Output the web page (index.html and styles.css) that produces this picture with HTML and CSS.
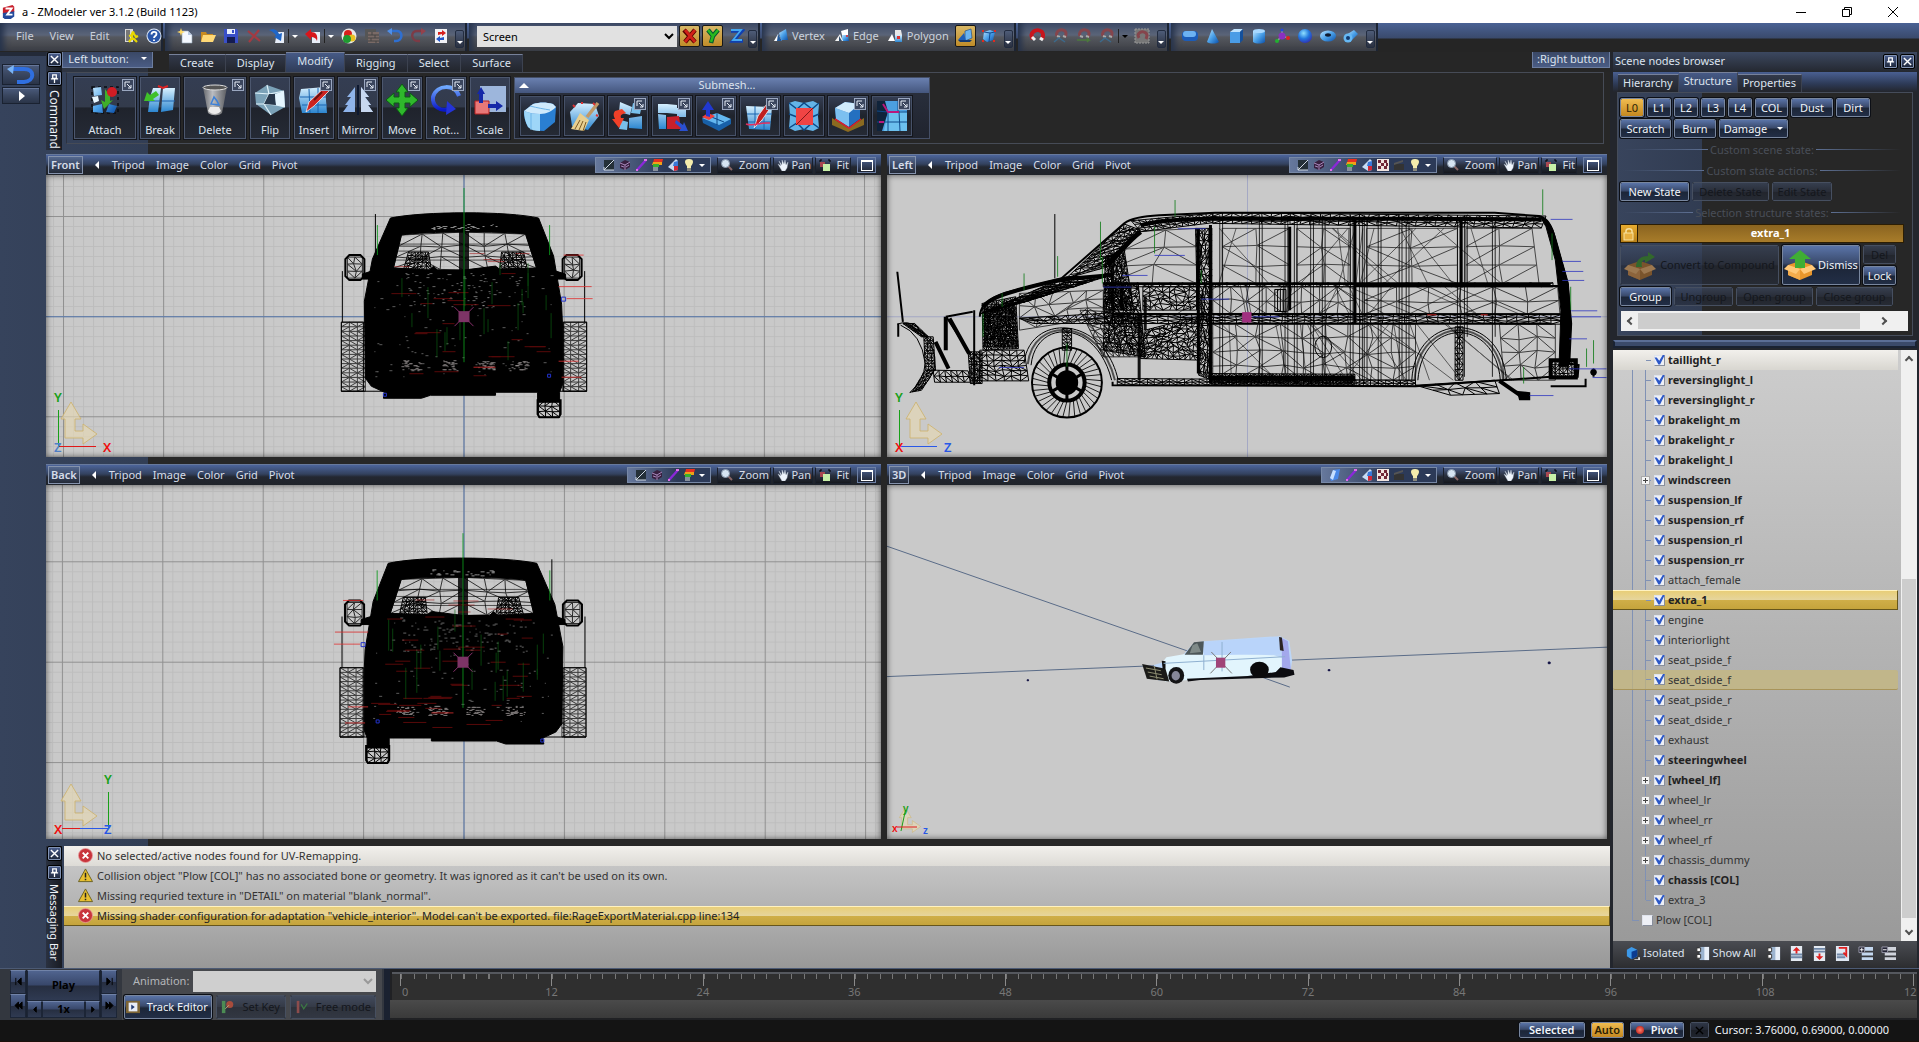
FILE: index.html
```html
<!DOCTYPE html>
<html lang="en">
<head>
<meta charset="utf-8">
<title>a - ZModeler ver 3.1.2 (Build 1123)</title>
<link rel="stylesheet" href="styles.css">
</head>
<body>
<svg class="sprite" aria-hidden="true">
  <defs>
    <linearGradient id="gBlue" x1="0" y1="0" x2="1" y2="1"><stop offset="0" stop-color="#bfe6ff"/><stop offset=".5" stop-color="#4aa0e8"/><stop offset="1" stop-color="#0b4fa8"/></linearGradient>
    <linearGradient id="gIce" x1="0" y1="0" x2="0" y2="1"><stop offset="0" stop-color="#d6f0ff"/><stop offset="1" stop-color="#2c86d0"/></linearGradient>
    <linearGradient id="gBin" x1="0" y1="0" x2="1" y2="0"><stop offset="0" stop-color="#777"/><stop offset=".4" stop-color="#e8e8e8"/><stop offset="1" stop-color="#666"/></linearGradient>
    <linearGradient id="gRot" x1="0" y1="0" x2="0" y2="1"><stop offset="0" stop-color="#6fa8ff"/><stop offset="1" stop-color="#0a18c8"/></linearGradient>
    <radialGradient id="gBall" cx=".4" cy=".3" r=".8"><stop offset="0" stop-color="#8fe0ff"/><stop offset=".5" stop-color="#2277dd"/><stop offset="1" stop-color="#3322aa"/></radialGradient>
    <pattern id="minor" width="10" height="10" patternUnits="userSpaceOnUse"><path d="M0 .5H10M.5 0V10" stroke="#000" stroke-opacity=".06"/></pattern>
    <pattern id="major" width="100" height="100" patternUnits="userSpaceOnUse"><path d="M0 .5H100M.5 0V100" stroke="#000" stroke-opacity=".24"/></pattern>
  </defs>
  <symbol id="logo" viewBox="0 0 16 16"><path d="M1 3 12 0l2 2v6L1 10z" fill="#c8202c"/><path d="M1 9 14 7v6l-4 3H3l-2-2z" fill="#234a9c"/><path d="M4 4h7L6 11h6" fill="none" stroke="#fff" stroke-width="2.2"/></symbol>
  <symbol id="exit" viewBox="0 0 16 16"><path d="M2 1h8v13H2z" fill="#d8d8d8"/><path d="M3 2h4v11H3z" fill="#777"/><path d="M8 6h3l2 3 2-1M9 6v4l-3 4M10 10l4 4M6 8l3-1" fill="none" stroke="#e8d800" stroke-width="2.2"/><circle cx="10" cy="4.500" r="1.600" fill="#e8d800"/></symbol>
  <symbol id="help" viewBox="0 0 16 16"><circle cx="8" cy="8" r="7.500" fill="#dfe8f5"/><circle cx="8" cy="8" r="6.500" fill="#2a56a8"/><path d="M5.500 6.500C5.500 3 10.500 3 10.500 6 10.500 8 8 8 8 10M8 11.500v1.500" fill="none" stroke="#fff" stroke-width="1.800"/></symbol>
  <symbol id="new" viewBox="0 0 16 16"><path d="M5 3h6l4 4v8H5z" fill="#f4f8ff" stroke="#9ab" stroke-width=".6"/><path d="M11 3v4h4z" fill="#b8c8e0"/><path d="m4 0 1 3 3 1-3 1-1 3-1-3-3-1 3-1z" fill="#ffd964"/></symbol>
  <symbol id="open" viewBox="0 0 16 16"><path d="M1 4h5l1 2h6v7H1z" fill="#c88a20"/><path d="M3 7h13l-3 7H1z" fill="#ffd977"/></symbol>
  <symbol id="save" viewBox="0 0 16 16"><path d="M1 1h13l1 2v12H1z" fill="#3a4fc8"/><path d="M4 1h8v5H4z" fill="#e8eefc"/><path d="M4 9h8v6H4z" fill="#151c50"/><path d="M9 2h2v3H9z" fill="#3a4fc8"/></symbol>
  <symbol id="cross" viewBox="0 0 16 16"><path d="m2 3 12 10M13 2 3 14" stroke="#a33a42" stroke-width="2.200"/></symbol>
  <symbol id="import" viewBox="0 0 16 16"><path d="M8 4h7v11H6z" fill="#e8eef8"/><path d="M0 2c6-2 9 1 10 4l3-1-1 8-7-4 2-1C6 5 4 4 0 2z" fill="#1f66c8"/></symbol>
  <symbol id="export" viewBox="0 0 16 16"><path d="M7 4h8v11H7z" fill="#e8eef8"/><path d="m0 6 6-5v3c5 0 7 3 6 9-1-3-3-4-6-4v3z" fill="#d8161c"/></symbol>
  <symbol id="mats" viewBox="0 0 16 16"><circle cx="8" cy="8" r="7.500" fill="#e8e8e8"/><circle cx="7" cy="6" r="4" fill="#d8201c"/><circle cx="11" cy="10" r="3.500" fill="#e8c020"/><circle cx="6" cy="11" r="4" fill="#1f9a30"/></symbol>
  <symbol id="bricks" viewBox="0 0 16 16"><path d="M1 1h11v11H1z" fill="#555"/><path d="M4 4h11v11H4z" fill="#7a6a66"/><path d="M4 7h11M4 10h11M4 13h11M8 4v3M11 7v3M7 10v3M12 13v2" stroke="#444"/></symbol>
  <symbol id="undo" viewBox="0 0 16 16"><path d="M3 3h7c6 0 6 10-1 10H7" fill="none" stroke="#2f6fd0" stroke-width="2.600"/><path d="M0 3 5 0v7z" fill="#4f8fe8"/></symbol>
  <symbol id="redo" viewBox="0 0 16 16"><path d="M13 3H7C0 3 1 13 8 13h2" fill="none" stroke="#7d3b46" stroke-width="2.400"/><path d="m16 3-5-3v7z" fill="#94424c"/></symbol>
  <symbol id="sync" viewBox="0 0 16 16"><path d="M2 1h12v14H2z" fill="#f2f2f5"/><path d="M5 7V4h4V2l4 3-4 3V6" fill="#d8201c"/><path d="M11 9v3H7v2l-4-3 4-3v2" fill="#2255c8"/></symbol>
  <symbol id="ax" viewBox="0 0 16 16"><path d="m2 2 11 12M13 2 3 14" stroke="#500" stroke-width="4.500"/><path d="m3 2 10 12M13 2 3 14" stroke="#d02018" stroke-width="2.800"/></symbol>
  <symbol id="ay" viewBox="0 0 16 16"><path d="m3 2 5 6 5-6M8 8l-2 7" fill="none" stroke="#053" stroke-width="4.500"/><path d="m3 2 5 6 5-6M8 8l-2 6" fill="none" stroke="#2ab81e" stroke-width="2.600"/></symbol>
  <symbol id="az" viewBox="0 0 16 16"><path d="M2 3h11L4 13h10" fill="none" stroke="#1040b0" stroke-width="3.600"/><path d="M2 2h10L4 12h9" fill="none" stroke="#45a8f0" stroke-width="1.800"/></symbol>
  <symbol id="vertex" viewBox="0 0 16 16"><path d="m6 5 7-4 2 11H8z" fill="url(#gBlue)"/><path d="m1 13 4-7 4 7z" fill="#fff"/><path d="m5 6 4 7H4z" fill="#225a9c"/></symbol>
  <symbol id="edge" viewBox="0 0 16 16"><path d="m7 3 7-2v6H8z" fill="#fff"/><path d="M8 7h6l1 6H8z" fill="url(#gBlue)"/><path d="m1 13 5-7 3 7z" fill="#f4f4f4"/><path d="m5 8 3 5H5z" fill="#34506e"/><circle cx="13" cy="8" r="1" fill="#e22"/></symbol>
  <symbol id="poly" viewBox="0 0 16 16"><path d="M7 2h6l1 5H7z" fill="#e8e8e8"/><path d="M7 7h7v7H7z" fill="url(#gIce)"/><path d="m0 13 4-7 3 7z" fill="#fff"/><path d="M9 8h3v3H9z" fill="#d33"/></symbol>
  <symbol id="facing" viewBox="0 0 16 16"><path d="m8 3 6-2 1 9-7 3z" fill="#6cb4f0" stroke="#15427c" stroke-width=".6"/><path d="m1 12 6-7 2 8z" fill="#1f5fb8"/><path d="M1 12h14l-2 2H3z" fill="#153a70"/></symbol>
  <symbol id="cage" viewBox="0 0 16 16"><path d="m3 4 6-2 5 2-2 8-6 2-4-3z" fill="url(#gBlue)"/><path d="m3 4 6 1 5-1M9 5l-1 9" fill="none" stroke="#134b90"/><path d="M1 2h2v2H1zM13 2h2v2h-2zM1 12h2v2H1zM12 12h2v2h-2z" fill="#e02a20"/></symbol>
  <symbol id="magnet" viewBox="0 0 16 16"><path d="M4 11C-1 5 8-1 13 4c2 3 1 5 0 7" fill="none" stroke="#c8141c" stroke-width="4"/><path d="m3 9 3 3M11 10l3 2" stroke="#eee" stroke-width="3"/></symbol>
  <symbol id="magnet2" viewBox="0 0 16 16"><path d="M5 8c-2-5 4-8 8-5 2 2 1 4 0 6" fill="none" stroke="#85454c" stroke-width="3"/><path d="m5 8 3 1M11 8l3 1" stroke="#aaa" stroke-width="2"/><path d="m2 14 5-4 6 4" fill="none" stroke="#3c6a8c" stroke-width="1.500"/></symbol>
  <symbol id="magnet3" viewBox="0 0 16 16"><path d="M5 8c-2-5 4-8 8-5 2 2 1 4 0 6" fill="none" stroke="#85454c" stroke-width="3"/><path d="m5 8 3 1M11 8l3 1" stroke="#aaa" stroke-width="2"/><path d="M2 12h12l-2-2m2 2-2 2" fill="none" stroke="#4c7a3c" stroke-width="1.500"/></symbol>
  <symbol id="magnet4" viewBox="0 0 16 16"><path d="M1 1h14v14H1z" fill="#777" stroke="#999" stroke-dasharray="2 1"/><path d="M5 10c-3-5 3-8 7-5 2 2 1 4 0 6" fill="none" stroke="#85454c" stroke-width="3"/></symbol>
  <symbol id="tablet" viewBox="0 0 16 16"><rect x="0" y="3" width="16" height="10" rx="4" fill="#1c5cb8"/><rect x="1" y="3" width="13" height="6" rx="3" fill="#6cb2f2"/></symbol>
  <symbol id="cone" viewBox="0 0 16 16"><path d="M7 1 14 14c-3 2-9 2-12 0z" fill="url(#gBlue)"/></symbol>
  <symbol id="box" viewBox="0 0 16 16"><path d="m2 4 4-3h9l-3 3z" fill="#bfe3ff"/><path d="M2 4h10v11H2z" fill="#4a9ce6"/><path d="m12 4 3-3v11l-3 3z" fill="#14509c"/></symbol>
  <symbol id="cyl" viewBox="0 0 16 16"><path d="M2 3v11c3 2 9 2 12 0V3z" fill="url(#gBlue)"/><ellipse cx="8" cy="3" rx="6" ry="2" fill="#a8d8ff"/></symbol>
  <symbol id="dummy" viewBox="0 0 16 16"><path d="M8 2v6M8 8l-5 5M8 8l6 2" stroke="#99a" stroke-width="1.500"/><circle cx="8" cy="8" r="3.500" fill="#8a2fc0"/><circle cx="8" cy="2" r="1.500" fill="#2244e0"/><circle cx="3" cy="13" r="2" fill="#22b030"/><circle cx="14" cy="10" r="2" fill="#e02020"/></symbol>
  <symbol id="sphere" viewBox="0 0 16 16"><circle cx="8" cy="8" r="7" fill="url(#gBall)"/></symbol>
  <symbol id="torus" viewBox="0 0 16 16"><ellipse cx="8" cy="8" rx="8" ry="5.500" fill="url(#gBlue)"/><ellipse cx="8" cy="7" rx="3" ry="1.700" fill="#101c30"/></symbol>
  <symbol id="pipe" viewBox="0 0 16 16"><path d="m3 7 8-5 4 4-8 8z" fill="url(#gBlue)"/><circle cx="5" cy="10" r="4.500" fill="#66b8f4"/><circle cx="5" cy="10" r="2" fill="#123a70"/></symbol>
  <symbol id="pin" viewBox="0 0 10 10"><path d="M3 1h4v4H3zM1 5.500h8M5 6v4" fill="none" stroke="#fff" stroke-width="1.400"/></symbol>
  <symbol id="xx" viewBox="0 0 10 10"><path d="m1 1 8 8M9 1 1 9" stroke="#fff" stroke-width="1.600"/></symbol>
  <symbol id="corner" viewBox="0 0 12 12"><rect x=".5" y=".5" width="11" height="11" fill="#3b465e" stroke="#9aa7c0"/><path d="M3 8V3h5M5 5l4 4M9 6v3H6" fill="none" stroke="#e8eef8"/></symbol>
  <symbol id="attach" viewBox="0 0 32 32"><path d="M3 3h26v26H3z" fill="none" stroke="#0a0c12" stroke-width="1.500" stroke-dasharray="3 3"/><path d="m4 4 8-1 1 8-8 1zM4 22l9-2 1 9-10-1zM20 20l8 2-3 7-8-1z" fill="url(#gBlue)"/><path d="m3 13 6-1 1 5-5 2z" fill="#e8f6ff"/><path d="m16 5 5 7v5l3-1-9 9-3-9 4 2z" fill="#3fae2a"/><circle cx="23" cy="8" r="5" fill="#d01c24"/></symbol>
  <symbol id="break" viewBox="0 0 32 32"><path d="M9 4h8l-3 24H4l2-15z" fill="url(#gIce)"/><path d="M19 4h12l-2 22-12 2z" fill="url(#gIce)"/><path d="M4 17h12M18 17h13" stroke="#1c62b0"/><path d="m14 2 5 2 5-2" stroke="#d22" fill="none" stroke-width="2"/><path d="m0 17 3-9 3 3 6-4 3 4-6 4 2 2z" fill="#3fc02a"/></symbol>
  <symbol id="trash" viewBox="0 0 32 32"><path d="m4 3 5 26c4 3 11 3 14 0l5-26z" fill="url(#gBin)" fill-opacity=".75"/><ellipse cx="16" cy="3.500" rx="12" ry="2.500" fill="#555" stroke="#ddd"/><path d="M9 27c4 4 10 4 13 0l-2-4h-9z" fill="#ececec"/><path d="m12 20 3-7 3 4 2 4z" fill="none" stroke="#3c80d8" stroke-width="1.500"/></symbol>
  <symbol id="flip" viewBox="0 0 32 32"><path d="M13 1 30 7l1 16-14 8L2 20 1 9z" fill="#7ba2b8"/><path d="m13 1 2 9 15-3M1 9l14 1-5 10M2 20h8l7 11M10 20l12 1 9 2M22 21l-1-11" fill="none" stroke="#dff2fa" stroke-width="1.200"/><path d="m15 10 6 0 1 11-12-1z" fill="#27374a"/><path d="m30 7 1 16-9-2-1-11z" fill="#e5f6ff"/></symbol>
  <symbol id="insert" viewBox="0 0 32 32"><path d="m3 5 24-2 2 26H4L1 14z" fill="url(#gIce)"/><path d="M2 13h26M4 21h25M11 5l1 24M20 4v25" stroke="#1a65b0" fill="none"/><path d="m8 28 3-10L27 3l4 4-15 15-8 6z" fill="#cc2420" stroke="#fff" stroke-width=".7"/><path d="m16 16 8-8" stroke="#611" stroke-width="2"/></symbol>
  <symbol id="mirror" viewBox="0 0 32 32"><path d="m13 3-8 10h4L3 21h3l-5 7h12zM19 3l8 10h-4l6 8h-3l5 7H19z" fill="#8fb4ea"/><path d="m19 3 8 10h-4l6 8h-3l5 7H19z" fill="#c8d8f0"/><path d="M16 1v30" stroke="#0d1830" stroke-width="2"/></symbol>
  <symbol id="move" viewBox="0 0 32 32"><path d="m16 0 6 8h-3v5h5v-4l8 7-8 7v-4h-5v5h3l-6 8-6-8h3v-5H8v4l-8-7 8-7v4h5V8h-3z" fill="#2fb82c" stroke="#0c5a14"/></symbol>
  <symbol id="rotate" viewBox="0 0 32 32"><path d="M29 12C25 0 7 0 3 13c-1 9 7 15 16 12" fill="none" stroke="url(#gRot)" stroke-width="4"/><path d="m17 17 9 8-10 6z" fill="#2434d8"/></symbol>
  <symbol id="scale" viewBox="0 0 32 32"><path d="M6 2h26v26H6z" fill="#9db6dc"/><path d="M1 17h14v13H1z" fill="#e87878" stroke="#b42020"/><path d="m7 3 4 7H9v9H5v-9H3zM14 20h8v-3l7 5-7 5v-3h-8z" fill="#1428a8"/></symbol>
  <symbol id="smooth" viewBox="0 0 32 32"><path d="m0 11 9-7c7-2 13-2 20 0l3 3-1 15-11 9c-6 0-11-1-16-4-3-5-4-11-4-16z" fill="#2a7fd2"/><path d="M0 11c5 2 10 3 16 3v17c-5 0-9-1-12-4-3-5-4-11-4-16z" fill="#9ed6f8"/><path d="m0 11 9-7c7-2 13-2 20 0l3 3c-4 4-9 7-16 7-6 0-11-1-16-3z" fill="#cfeafc"/><path d="M6 6c8 2 14 3 20 4M7 13v17" stroke="#6cb4e8" fill="none"/></symbol>
  <symbol id="brush" viewBox="0 0 32 32"><path d="m2 12 8-9 17 1 4 12-11 14-16-4z" fill="url(#gIce)"/><path d="M30 3 19 17" stroke="#c09868" stroke-width="3.500"/><path d="m12 13 9 7-5 11-13-2z" fill="#e8cf90"/><path d="m12 20-5 9M15 21l-4 9M18 22l-3 9" stroke="#7c5a24"/><path d="m5 5 2 2M14 2v2M25 3l2 2M28 15l2 1" stroke="#d33" stroke-width="2"/></symbol>
  <symbol id="detach" viewBox="0 0 32 32"><path d="m8 2 12 5-2 8L7 12zM17 18l13-2v13l-13-1z" fill="url(#gIce)"/><path d="m21 3 9 2-2 9-9-1zM9 20l7 2-1 8-8-1z" fill="#78c0ec"/><path d="M10 9 3 11c-3 4 0 7 0 8h-3l7 9 5-10H9c-1-3 1-4 5-5z" fill="#f04028"/></symbol>
  <symbol id="copy" viewBox="0 0 32 32"><path d="M2 4h9v9H2zM11 4l10 1v9l-10-1zM2 14l8 1v14H3zM21 8h9v9h-9z" fill="url(#gIce)"/><path d="m11 17 12-1 2 13H11z" fill="#c8202c"/><path d="m20 20 7 5 1-3 4 9h-9l2-3-6-5z" fill="#2a50d0"/></symbol>
  <symbol id="extrude" viewBox="0 0 32 32"><path d="m2 18 15-5 14 6-12 11z" fill="#64b8f0"/><path d="m2 18 17 7v6L3 23zM19 25l12-6v5l-12 7z" fill="#1860a8"/><path d="m9 16 15 6M17 13v12" stroke="#0d4684"/><path d="m2 17 6-4 7 3-6 4z" fill="#f04040"/><path d="M6 16v-6H2l6-9 6 9h-4v7z" fill="#2038d0"/></symbol>
  <symbol id="cut" viewBox="0 0 32 32"><path d="m2 6 26 1-2 23-21-1z" fill="url(#gIce)"/><path d="M3 14h25M4 22h23M11 6v23M20 7v23" stroke="#1a65b0"/><path d="m10 28 4-12L25 1l4 3-11 16z" fill="#c02020" stroke="#fff" stroke-width=".7"/><path d="M2 24c8 3 12-2 24-1" fill="none" stroke="#e03060" stroke-width="1.500"/></symbol>
  <symbol id="fill" viewBox="0 0 32 32"><path d="m1 3 6-2 9 2 9-2 6 3-1 12 1 12-6 3-9-2-9 2-6-3 1-12z" fill="#64b4e8"/><path d="M1 3l8 6 7-6 8 6 7-6M1 28l8-5 7 7 8-7 7 5M1 14l8 3M31 14l-7 3" fill="none" stroke="#0d4a88" stroke-width="1.400"/><path d="M8 8h17v17H8z" fill="#f04444"/><path d="M25 8 8 25" stroke="#801818"/></symbol>
  <symbol id="snap" viewBox="0 0 32 32"><path d="m0 18 16 10 16-10v7L16 32 0 25z" fill="#8a6a20"/><path d="m3 8 10-6 15 2v15L17 27 4 19z" fill="#2470c0"/><path d="m3 8 14 5v14L4 19z" fill="#7cc0f0"/><path d="m3 8 10-6 15 2-11 9z" fill="#d0ebfc"/><path d="m3 19 14 9 12-9" fill="none" stroke="#d82030" stroke-width="1.500"/></symbol>
  <symbol id="weld" viewBox="0 0 32 32"><path d="M1 1h30v30H1z" fill="#4c9fdf"/><path d="m9 1 3 11-6 19H1V1z" fill="#10233a"/><path d="m12 12 11-1 8 1v19H8z" fill="#6cc0ee"/><path d="M12 12v19M23 11l1 20M1 22h30M1 11l11 1h19M22 1v11" stroke="#0e4a8a" fill="none"/><path d="m7 4 5 8h11M3 22h5" stroke="#b8187c" stroke-width="2" fill="none"/></symbol>
  <symbol id="v-wire" viewBox="0 0 12 12"><path d="M1 1h10v10H1z" fill="#243038"/><path d="m1 11 10-10M1 11h10M1 11V8" stroke="#cfd8e4"/></symbol>
  <symbol id="v-box" viewBox="0 0 12 12"><path d="m1 4 5-3 5 2v5L6 11 1 9z" fill="#38203f"/><path d="m1 4 5 2 5-3M6 6v5M2 7l3 1M7 8l3-2" stroke="#a887bc" fill="none"/></symbol>
  <symbol id="v-edge" viewBox="0 0 12 12"><path d="M2 11 11 1" stroke="#8a28d8" stroke-width="2.400"/><path d="M1 10h2v2H1zM9 0h3v2H9z" fill="#e070e8"/></symbol>
  <symbol id="v-rain" viewBox="0 0 12 12"><path d="M3 0h9l-1 4H2z" fill="#e83020"/><path d="M2 3h9v3H1z" fill="#f0a018"/><path d="M2 5h6v3H2z" fill="#38b030"/><path d="M2 8h5v4H2z" fill="#88909c"/></symbol>
  <symbol id="v-shade" viewBox="0 0 12 12"><path d="m9 0 2 2v9l-4 1-6-4z" fill="#c8dcf4"/><path d="m7 3 4-1v5H6z" fill="#3a78d8"/><path d="m7 7 4 0v4L7 12z" fill="#d02838"/></symbol>
  <symbol id="v-bulb" viewBox="0 0 12 12"><path d="M6 0c6 0 4 5 2 7v2H4V7C2 5 0 0 6 0z" fill="#f4ecac"/><path d="M4 9h4v3H4z" fill="#88887c"/></symbol>
  <symbol id="v-check" viewBox="0 0 12 12"><path d="M0 0h12v12H0z" fill="#f0e4e0"/><path d="M1 1h3v3H1zM7 1h3v3H7zM4 4h3v3H4zM9 4h2v3H9zM1 7h3v3H1zM7 7h3v3H7z" fill="#702838"/></symbol>
  <symbol id="v-film" viewBox="0 0 12 12"><path d="M1 5h10v6H1z" fill="#333"/><path d="m1 4 9-3v2L1 6z" fill="#555"/></symbol>
  <symbol id="v-blue" viewBox="0 0 12 12"><path d="m4 1 7-1-2 10-7 2-1-3z" fill="#4a88e8"/><path d="m4 1 3 1-3 9-3-2z" fill="#c8e0ff"/></symbol>
  <symbol id="v-zoom" viewBox="0 0 12 12"><path d="m7 7 4 4" stroke="#866" stroke-width="2"/><circle cx="4.500" cy="4.500" r="4" fill="#d6e4f2" stroke="#8898ac"/></symbol>
  <symbol id="v-hand" viewBox="0 0 12 12"><path d="M1 5l3 2-2-5 3 4V1l2 4 1-4 1 5 2-3-1 6-2 3H5z" fill="#eef4fb" stroke="#b8c4d4" stroke-width=".4"/></symbol>
  <symbol id="v-fit" viewBox="0 0 12 12"><path d="M1 3V1h2M9 1h2v2" fill="none" stroke="#000"/><path d="M1 3h5v5H1z" fill="#a84850"/><path d="M4 5h7v7H4z" fill="#c8f0a8"/></symbol>
  <symbol id="lock" viewBox="0 0 14 14"><path d="M4 6V4c0-3 6-3 6 0v2" fill="none" stroke="#f6dfa0" stroke-width="1.500"/><rect x="2" y="6" width="9" height="7" fill="#e8b040" stroke="#fae3a0"/></symbol>
  <symbol id="crate" viewBox="0 0 32 32"><path d="m4 16 12-4 12 4v10l-12 5-12-5z" fill="#e8962c"/><path d="m4 16 12 4v11L4 26z" fill="#f4ac4c"/><path d="m4 16-4 4 12 5 4-5zM28 16l4 4-12 5-4-5z" fill="#ffc878"/><path d="M16 1 27 10h-6v9H11v-9H5z" fill="#3fae34"/></symbol>
  <symbol id="crate2" viewBox="0 0 32 32"><path d="m4 16 12-4 12 4v10l-12 5-12-5z" fill="#7a542c"/><path d="m4 16 12 4v11L4 26z" fill="#8c643c"/><path d="m4 16-4 4 12 5 4-5zM28 16l4 4-12 5-4-5z" fill="#9c7850"/><path d="M12 18c0-8 6-11 12-11V3l7 5-10 6v-3c-3 0-4 3-3 7z" fill="#32682c"/></symbol>
  <symbol id="err" viewBox="0 0 16 16"><circle cx="8" cy="8" r="7.500" fill="#c8343c" stroke="#e8a0a0" stroke-width=".8"/><path d="m5 5 6 6M11 5l-6 6" stroke="#fff" stroke-width="2"/></symbol>
  <symbol id="warn" viewBox="0 0 16 16"><path d="m8 1 7.500 13.500H.5z" fill="#e8c030" stroke="#6a6020"/><path d="M8 5v5M8 11.500v1.500" stroke="#222" stroke-width="1.600"/></symbol>
  <symbol id="iso" viewBox="0 0 16 16"><path d="m2 4 5-3 6 3v7l-6 3-5-3z" fill="#3c98e8"/><path d="m7 6 6-2v7l-6 3z" fill="#0c3c90"/><path d="M10 14h4v-2h2v3h-6z" fill="#ddd"/></symbol>
  <symbol id="list" viewBox="0 0 16 16"><path d="M5 1h10v14H5z" fill="#9cb4d0"/><path d="M10 1h5v14h-5z" fill="#e8eff8"/><path d="M2 2h4v4H2zM2 9h4v4H2z" fill="#fff" stroke="#333"/></symbol>
  <symbol id="l-up" viewBox="0 0 16 16"><path d="M2 0h12v16H2z" fill="#e4eaf2"/><path d="M2 9h12M2 12h12" stroke="#7088a8" stroke-width="2"/><path d="m8 1 4 4H9v3H7V5H4z" fill="#e02020"/></symbol>
  <symbol id="l-dn" viewBox="0 0 16 16"><path d="M2 0h12v16H2z" fill="#e4eaf2"/><path d="M2 3h12M2 6h12" stroke="#7088a8" stroke-width="2"/><path d="m8 15 4-4H9V8H7v3H4z" fill="#e02020"/></symbol>
  <symbol id="l-mv" viewBox="0 0 16 16"><path d="M1 0h14v16H1z" fill="#dfe7f2"/><path d="M2 9h9M2 12h9" stroke="#7088a8" stroke-width="2"/><path d="M4 2h8v8l-3-3" fill="none" stroke="#e02020" stroke-width="2"/></symbol>
  <symbol id="l-exp" viewBox="0 0 16 16"><path d="M6 1h10v4H6zM4 7h12v3H4zM4 12h12v3H4z" fill="#c4d8f0"/><path d="M1 1h6v6H1z" fill="#223" stroke="#99a"/><path d="M2 4h4M4 2v4" stroke="#fff"/></symbol>
  <symbol id="l-col" viewBox="0 0 16 16"><path d="M6 1h10v4H6zM4 7h12v3H4zM4 12h12v3H4z" fill="#d0d4dc"/><path d="M1 1h6v6H1z" fill="#223" stroke="#99a"/><path d="M2 4h4" stroke="#fff"/></symbol>
  <symbol id="track" viewBox="0 0 16 16"><path d="M0 1h16v14H0z" fill="#7c6434"/><path d="M3 3h10v10H3z" fill="#e8edf8"/><path d="m6 5 4 3-4 3z" fill="#223a70"/></symbol>
  <symbol id="key" viewBox="0 0 16 16"><path d="M1 1h4v14H1z" fill="#4c8c54"/><circle cx="10" cy="5" r="4" fill="#a84c3c"/><path d="m5 10 4-4" stroke="#bb8"/></symbol>
  <symbol id="free" viewBox="0 0 16 16"><path d="M2 1h3v14H2z" fill="#8c4c4c"/><path d="m7 5 3 5 4-6" fill="none" stroke="#3c7844" stroke-width="1.500"/></symbol>
  <symbol id="arrowmark" viewBox="-1 -1 40 44"><path d="M11 0 21 17h-6v12h8v-7l14 10-14 10v-6H5V17H1z" fill="#e6d9b4" fill-opacity=".65" stroke="#cdb26a" stroke-opacity=".8"/></symbol>
</svg>

<header class="titlebar">
  <svg class="i16"><use href="#logo"/></svg><h1>a - ZModeler ver 3.1.2 (Build 1123)</h1>
  <div class="win">
    <button aria-label="Minimize"><svg viewBox="0 0 10 10"><path d="M0 5.500h10"/></svg></button>
    <button aria-label="Restore"><svg viewBox="0 0 10 10"><path d="M.5 2.500h7v7h-7zM2.500 2.500v-2h7v7h-2"/></svg></button>
    <button aria-label="Close"><svg viewBox="0 0 10 10"><path d="m0 0 10 10M10 0 0 10"/></svg></button>
  </div>
</header>

<nav class="toolbar">
  <div class="band menu"><button>File</button><button>View</button><button>Edit</button><span class="pair"><button class="tb" aria-label="Exit"><svg><use href="#exit"/></svg></button><button class="tb" aria-label="Help"><svg><use href="#help"/></svg></button></span></div>
  <div class="band"><button class="tb" aria-label="New"><svg><use href="#new"/></svg></button><button class="tb" aria-label="Open"><svg><use href="#open"/></svg></button><button class="tb" aria-label="Save"><svg><use href="#save"/></svg></button><button class="tb" aria-label="Delete"><svg><use href="#cross"/></svg></button><button class="tb" aria-label="Import"><svg><use href="#import"/></svg></button><button class="drop" aria-label="Import options"></button><button class="tb" aria-label="Export"><svg><use href="#export"/></svg></button><button class="drop" aria-label="Export options"></button><button class="tb" aria-label="Materials"><svg><use href="#mats"/></svg></button><button class="tb" aria-label="Textures"><svg><use href="#bricks"/></svg></button><button class="tb" aria-label="Undo"><svg><use href="#undo"/></svg></button><button class="tb" aria-label="Redo"><svg><use href="#redo"/></svg></button><button class="tb" aria-label="Reload"><svg><use href="#sync"/></svg></button><button class="more" aria-label="More"></button></div>
  <div class="band axes"><select class="space" aria-label="Coordinate space"><option>Screen</option></select><button class="tb on" aria-label="X axis"><svg><use href="#ax"/></svg></button><button class="tb on" aria-label="Y axis"><svg><use href="#ay"/></svg></button><button class="tb" aria-label="Z axis"><svg><use href="#az"/></svg></button><button class="more" aria-label="More"></button></div>
  <div class="band"><button class="lvl"><svg><use href="#vertex"/></svg>Vertex</button><button class="lvl"><svg><use href="#edge"/></svg>Edge</button><button class="lvl"><svg><use href="#poly"/></svg>Polygon</button><button class="tb on" aria-label="Objects"><svg><use href="#facing"/></svg></button><button class="tb" aria-label="Bounding"><svg><use href="#cage"/></svg></button><button class="more" aria-label="More"></button></div>
  <div class="band"><button class="tb" aria-label="Snap"><svg><use href="#magnet"/></svg></button><button class="tb" aria-label="Snap vertex"><svg><use href="#magnet2"/></svg></button><button class="tb" aria-label="Snap axis"><svg><use href="#magnet3"/></svg></button><button class="tb" aria-label="Snap edge"><svg><use href="#magnet2"/></svg></button><button class="drop dark" aria-label="Snap options"></button><button class="tb" aria-label="Snap grid"><svg><use href="#magnet4"/></svg></button><button class="more" aria-label="More"></button></div>
  <div class="band"><button class="tb" aria-label="Surface"><svg><use href="#tablet"/></svg></button><button class="tb" aria-label="Cone"><svg><use href="#cone"/></svg></button><button class="tb" aria-label="Box"><svg><use href="#box"/></svg></button><button class="tb" aria-label="Cylinder"><svg><use href="#cyl"/></svg></button><button class="tb" aria-label="Dummy"><svg><use href="#dummy"/></svg></button><button class="tb" aria-label="Sphere"><svg><use href="#sphere"/></svg></button><button class="tb" aria-label="Torus"><svg><use href="#torus"/></svg></button><button class="tb" aria-label="Pipe"><svg><use href="#pipe"/></svg></button><button class="more" aria-label="More"></button></div>
</nav>

<main class="work">
  <aside class="rail">
    <button aria-label="Undo"><svg viewBox="0 0 30 20"><path d="M4 4h14c11 0 11 12 0 13h-7" fill="none" stroke="#2f6fe0" stroke-width="4"/><path d="M1 4 8 0l-1 9z" fill="#7ab4f4"/></svg></button>
    <button class="go" aria-label="Expand"><svg viewBox="0 0 30 20"><path d="m13 5 6 5-6 5z" fill="#fff"/></svg></button>
  </aside>

  <div class="center">
    <section class="command">
      <div class="grip"><button class="sq" aria-label="Close"><svg><use href="#xx"/></svg></button><button class="sq" aria-label="Pin"><svg><use href="#pin"/></svg></button><span class="vert">Command</span></div>
      <div class="ribbon">
        <div class="ribtop">
          <button class="mouse">Left button:<i class="tri"></i></button>
          <div class="tabs"><button>Create</button><button>Display</button><button class="sel">Modify</button><button>Rigging</button><button>Select</button><button>Surface</button></div>
          <button class="mouse right">:Right button</button>
        </div>
        <div class="tools">
          <button class="big wide"><svg class="i32"><use href="#attach"/></svg><svg class="cnr"><use href="#corner"/></svg>Attach</button>
          <button class="big"><svg class="i32"><use href="#break"/></svg>Break</button>
          <button class="big wide"><svg class="i32"><use href="#trash"/></svg><svg class="cnr"><use href="#corner"/></svg>Delete</button>
          <button class="big"><svg class="i32"><use href="#flip"/></svg>Flip</button>
          <button class="big"><svg class="i32"><use href="#insert"/></svg><svg class="cnr"><use href="#corner"/></svg>Insert</button>
          <button class="big"><svg class="i32"><use href="#mirror"/></svg><svg class="cnr"><use href="#corner"/></svg>Mirror</button>
          <button class="big"><svg class="i32"><use href="#move"/></svg><svg class="cnr"><use href="#corner"/></svg>Move</button>
          <button class="big"><svg class="i32"><use href="#rotate"/></svg><svg class="cnr"><use href="#corner"/></svg>Rot...</button>
          <button class="big"><svg class="i32"><use href="#scale"/></svg>Scale</button>
          <div class="submesh">
            <h2><i class="tri up"></i>Submesh...</h2>
            <div class="subrow">
              <button aria-label="Smooth"><svg class="i32"><use href="#smooth"/></svg></button>
              <button aria-label="Brush"><svg class="i32"><use href="#brush"/></svg></button>
              <button aria-label="Detach"><svg class="i32"><use href="#detach"/></svg><svg class="cnr"><use href="#corner"/></svg></button>
              <button aria-label="Copy"><svg class="i32"><use href="#copy"/></svg><svg class="cnr"><use href="#corner"/></svg></button>
              <button aria-label="Extrude"><svg class="i32"><use href="#extrude"/></svg><svg class="cnr"><use href="#corner"/></svg></button>
              <button aria-label="Cut"><svg class="i32"><use href="#cut"/></svg><svg class="cnr"><use href="#corner"/></svg></button>
              <button aria-label="Fill"><svg class="i32"><use href="#fill"/></svg></button>
              <button aria-label="Snap"><svg class="i32"><use href="#snap"/></svg><svg class="cnr"><use href="#corner"/></svg></button>
              <button aria-label="Weld"><svg class="i32"><use href="#weld"/></svg><svg class="cnr"><use href="#corner"/></svg></button>
            </div>
          </div>
        </div>
      </div>
    </section>

    <section class="views">
      <article class="view">
        <header><button class="vname">Front</button><nav><i class="tri lft"></i><button>Tripod</button><button>Image</button><button>Color</button><button>Grid</button><button>Pivot</button></nav>
          <div class="tray"><svg><use href="#v-wire"/></svg><svg><use href="#v-box"/></svg><svg><use href="#v-edge"/></svg><svg><use href="#v-rain"/></svg><svg><use href="#v-shade"/></svg><svg><use href="#v-bulb"/></svg><i class="tri"></i></div>
          <div class="vbtns"><button class="vz"><svg><use href="#v-zoom"/></svg>Zoom</button><button class="vp"><svg><use href="#v-hand"/></svg>Pan</button><button class="vf"><svg><use href="#v-fit"/></svg>Fit</button></div><button class="max" aria-label="Maximize"></button></header>
        <div class="canvas">
          <svg class="scene" viewBox="-417 -141 834 282" preserveAspectRatio="xMidYMid slice"><rect class="minor" x="-1000" y="-500" width="2000" height="1000"/><rect class="major" x="-1000" y="-500" width="2000" height="1000"/><path d="M-1000 .5H1000M.5 -500V500" stroke="#5a7bb0"/><g id="front"></g></svg>
          <svg class="gizmo" viewBox="0 0 74 72"><use href="#arrowmark" x="9" y="16" width="40" height="44"/><path d="M8.500 25v37" stroke="#18a018"/><path d="M8 61.500h38" stroke="#e01818"/><text x="4" y="17" fill="#18a018">Y</text><text x="53" y="67" fill="#f01010">X</text><text x="4" y="67" fill="#5080c8">Z</text></svg>
        </div>
      </article>
      <article class="view">
        <header><button class="vname">Left</button><nav><i class="tri lft"></i><button>Tripod</button><button>Image</button><button>Color</button><button>Grid</button><button>Pivot</button></nav>
          <div class="tray"><svg><use href="#v-wire"/></svg><svg><use href="#v-box"/></svg><svg><use href="#v-edge"/></svg><svg><use href="#v-rain"/></svg><svg><use href="#v-shade"/></svg><svg><use href="#v-check"/></svg><svg><use href="#v-film"/></svg><svg><use href="#v-bulb"/></svg><i class="tri"></i></div>
          <div class="vbtns"><button class="vz"><svg><use href="#v-zoom"/></svg>Zoom</button><button class="vp"><svg><use href="#v-hand"/></svg>Pan</button><button class="vf"><svg><use href="#v-fit"/></svg>Fit</button></div><button class="max" aria-label="Maximize"></button></header>
        <div class="canvas">
          <svg class="scene" viewBox="-360 -141 720 282" preserveAspectRatio="xMidYMid slice"><path d="M-1000 .5H1000M.5 -500V500" stroke="#a4a8c4"/><g id="left" transform="translate(-367 -166) scale(.4655 .3333)"></g></svg>
          <svg class="gizmo" viewBox="0 0 74 72"><use href="#arrowmark" x="13" y="16" width="40" height="44"/><path d="M8.500 25v37" stroke="#18a018"/><path d="M8 61.500h38" stroke="#2858e8"/><text x="4" y="17" fill="#18a018">Y</text><text x="53" y="67" fill="#2858e8">Z</text><text x="4" y="67" fill="#f01010">X</text></svg>
        </div>
      </article>
      <article class="view">
        <header><button class="vname">Back</button><nav><i class="tri lft"></i><button>Tripod</button><button>Image</button><button>Color</button><button>Grid</button><button>Pivot</button></nav>
          <div class="tray"><svg><use href="#v-wire"/></svg><svg><use href="#v-box"/></svg><svg><use href="#v-edge"/></svg><svg><use href="#v-rain"/></svg><i class="tri"></i></div>
          <div class="vbtns"><button class="vz"><svg><use href="#v-zoom"/></svg>Zoom</button><button class="vp"><svg><use href="#v-hand"/></svg>Pan</button><button class="vf"><svg><use href="#v-fit"/></svg>Fit</button></div><button class="max" aria-label="Maximize"></button></header>
        <div class="canvas">
          <svg class="scene" viewBox="-417 -176 834 352" preserveAspectRatio="xMidYMid slice"><rect class="minor" x="-1000" y="-500" width="2000" height="1000"/><rect class="major" x="-1000" y="-500" width="2000" height="1000"/><path d="M.5 -500V500" stroke="#5a7bb0"/><g id="back" transform="scale(-1 1)"></g></svg>
          <svg class="gizmo" viewBox="0 0 74 72"><use href="#arrowmark" x="9" y="16" width="40" height="44"/><path d="M58.500 25v37" stroke="#18a018"/><path d="M12 61.500h18" stroke="#e01818"/><path d="M30 61.500h28" stroke="#2858e8"/><text x="54" y="17" fill="#18a018">Y</text><text x="4" y="67" fill="#f01010">X</text><text x="54" y="67" fill="#2858e8">Z</text></svg>
        </div>
      </article>
      <article class="view">
        <header><button class="vname">3D</button><nav><i class="tri lft"></i><button>Tripod</button><button>Image</button><button>Color</button><button>Grid</button><button>Pivot</button></nav>
          <div class="tray"><svg><use href="#v-blue"/></svg><svg><use href="#v-edge"/></svg><svg><use href="#v-shade"/></svg><svg><use href="#v-check"/></svg><svg><use href="#v-film"/></svg><svg><use href="#v-bulb"/></svg><i class="tri"></i></div>
          <div class="vbtns"><button class="vz"><svg><use href="#v-zoom"/></svg>Zoom</button><button class="vp"><svg><use href="#v-hand"/></svg>Pan</button><button class="vf"><svg><use href="#v-fit"/></svg>Fit</button></div><button class="max" aria-label="Maximize"></button></header>
        <div class="canvas">
          <svg class="scene" viewBox="-360 -176 720 352" preserveAspectRatio="xMidYMid slice">
            <g transform="translate(-367 -207) scale(.4655 .3333)" class="van3d">
              <path d="M-60 238 735 625 880 697M-60 670 732 625 1640 573" fill="none" stroke="#5a6c88"/>
              <path d="m648 606 26-40 22-6 130-13 33-2 20 14 6 60-4 36-22 12-180 4-80 6-6-30-4-16z" fill="#bcd6f8"/>
              <path d="m610 618 6-10 40-10 40-4 150 8 32 14 2 44-30 8-185 8-52 4z" fill="#e2f5fd"/>
              <path d="m697 562 158-14 5 50-165 4z" fill="#b9d4fa"/>
              <path d="m863 550 13 10 7 94-20-8z" fill="#a3a8ec"/>
              <path d="m655 600 20-37 21-3-2 40z" fill="#4c5658"/>
              <path d="m672 572 10-6 8 26-24 4z" fill="#7f8a88"/>
              <path d="m857 547 6 2 4 40-8-2z" fill="#2a2224"/>
              <path d="m660 672 130-8 60-12 10-14 28 8 2 14-22 8-180 8-26 4z" fill="#0c0c10"/>
              <ellipse cx="815" cy="645" rx="20" ry="24" fill="#0a0a0c"/><ellipse cx="637" cy="662" rx="17" ry="25" fill="#141416"/><ellipse cx="636" cy="663" rx="9" ry="14" fill="#889"/>
              <path d="m564 628 50 14 8 38-48-8z" fill="#1a1a18"/><path d="m572 640 32 8M576 652l30 8M580 664l30 8M590 634l6 40" stroke="#8c8c70"/>
              <path d="m606 618 8 2v22l-6 2z" fill="#111"/>
              <path d="M696 602v44M610 626l260-20M735 562v88" fill="none" stroke="#8fb0d0"/>
              <path d="m712 592 44 64M754 592l-44 64" stroke="#777"/><path d="M722 609h20v30h-20z" fill="#a04478"/>
              <path d="M318 675h3v3h-3zM962 645h4v3h-4zM1433 622h4v5h-4z" fill="#114" stroke="#114"/>
            </g>
          </svg>
          <svg class="gizmo small" viewBox="0 0 46 36"><use href="#arrowmark" x="6" y="4" width="26" height="26"/><path d="M14.500 7 10 28" stroke="#18a018"/><path d="M6 24h20" stroke="#e01818"/><text x="12" y="9" fill="#18a018">y</text><text x="1" y="29" fill="#f01010">x</text><text x="32" y="31" fill="#2858e8">z</text></svg>
        </div>
      </article>
    </section>

    <section class="messages">
      <div class="grip"><button class="sq" aria-label="Close"><svg><use href="#xx"/></svg></button><button class="sq" aria-label="Pin"><svg><use href="#pin"/></svg></button><span class="vert">Messaging Bar</span></div>
      <ul class="log">
        <li class="first"><svg><use href="#err"/></svg>No selected/active nodes found for UV-Remapping.</li>
        <li><svg><use href="#warn"/></svg>Collision object "Plow [COL]" has no associated bone or geometry. It was ignored as it can't be used on its own.</li>
        <li><svg><use href="#warn"/></svg>Missing requried texture in "DETAIL" on material "blank_normal".</li>
        <li class="gold"><svg><use href="#err"/></svg>Missing shader configuration for adaptation "vehicle_interior". Model can't be exported. file:RageExportMaterial.cpp line:134</li>
      </ul>
    </section>
  </div>

  <aside class="browser">
    <header><h2>Scene nodes browser</h2><button class="sq" aria-label="Pin"><svg><use href="#pin"/></svg></button><button class="sq" aria-label="Close"><svg><use href="#xx"/></svg></button></header>
    <div class="ntabs"><button>Hierarchy</button><button class="sel">Structure</button><button>Properties</button></div>
    <div class="panel">
      <div class="row"><button class="b gold">L0</button><button class="b">L1</button><button class="b">L2</button><button class="b">L3</button><button class="b">L4</button><button class="b col">COL</button><button class="b dust">Dust</button><button class="b dirt">Dirt</button></div>
      <div class="row"><button class="b scratch">Scratch</button><button class="b dust">Burn</button><button class="b dmg">Damage<i class="tri"></i></button></div>
      <div class="sep"><span>Custom scene state:</span></div>
      <div class="sep"><span>Custom state actions:</span></div>
      <div class="row"><button class="b ns">New State</button><button class="b ds" disabled>Delete State</button><button class="b es" disabled>Edit State</button></div>
      <div class="sep"><span>Selection structure states:</span></div>
      <div class="state"><button aria-label="Locked"><svg><use href="#lock"/></svg></button><strong>extra_1</strong></div>
      <div class="row tall"><button class="b conv" disabled><svg class="i32"><use href="#crate2"/></svg>Convert to Compound</button><button class="b dis"><svg class="i32"><use href="#crate"/></svg>Dismiss</button><div class="stack"><button class="b" disabled>Del</button><button class="b">Lock</button></div></div>
      <div class="row"><button class="b scratch">Group</button><button class="b ug" disabled>Ungroup</button><button class="b og" disabled>Open group</button><button class="b og" disabled>Close group</button></div>
      <div class="hbar"><i class="chev l"></i><span></span><i class="chev r"></i></div>
    </div>
    <div class="split"></div>
    <div class="treewrap">
      <ul class="tree">
        <li class="first bold"><label><input type="checkbox" checked>taillight_r</label></li>
        <li class="bold"><label><input type="checkbox" checked>reversinglight_l</label></li>
        <li class="bold"><label><input type="checkbox" checked>reversinglight_r</label></li>
        <li class="bold"><label><input type="checkbox" checked>brakelight_m</label></li>
        <li class="bold"><label><input type="checkbox" checked>brakelight_r</label></li>
        <li class="bold"><label><input type="checkbox" checked>brakelight_l</label></li>
        <li class="bold"><button class="plus" aria-label="Expand"></button><label><input type="checkbox" checked>windscreen</label></li>
        <li class="bold"><label><input type="checkbox" checked>suspension_lf</label></li>
        <li class="bold"><label><input type="checkbox" checked>suspension_rf</label></li>
        <li class="bold"><label><input type="checkbox" checked>suspension_rl</label></li>
        <li class="bold"><label><input type="checkbox" checked>suspension_rr</label></li>
        <li><label><input type="checkbox" checked>attach_female</label></li>
        <li class="bold gold"><label><input type="checkbox" checked>extra_1</label></li>
        <li><label><input type="checkbox" checked>engine</label></li>
        <li><label><input type="checkbox" checked>interiorlight</label></li>
        <li><label><input type="checkbox" checked>seat_pside_f</label></li>
        <li class="hover"><label><input type="checkbox" checked>seat_dside_f</label></li>
        <li><label><input type="checkbox" checked>seat_pside_r</label></li>
        <li><label><input type="checkbox" checked>seat_dside_r</label></li>
        <li><label><input type="checkbox" checked>exhaust</label></li>
        <li class="bold"><label><input type="checkbox" checked>steeringwheel</label></li>
        <li class="bold"><button class="plus" aria-label="Expand"></button><label><input type="checkbox" checked>[wheel_lf]</label></li>
        <li><button class="plus" aria-label="Expand"></button><label><input type="checkbox" checked>wheel_lr</label></li>
        <li><button class="plus" aria-label="Expand"></button><label><input type="checkbox" checked>wheel_rr</label></li>
        <li><button class="plus" aria-label="Expand"></button><label><input type="checkbox" checked>wheel_rf</label></li>
        <li><button class="plus" aria-label="Expand"></button><label><input type="checkbox" checked>chassis_dummy</label></li>
        <li class="bold"><label><input type="checkbox" checked>chassis [COL]</label></li>
        <li><label><input type="checkbox" checked>extra_3</label></li>
        <li class="root"><label><input type="checkbox">Plow [COL]</label></li>
      </ul>
      <div class="vbar"><i class="chev u"></i><span></span><i class="chev d"></i></div>
    </div>
    <footer><button><svg><use href="#iso"/></svg>Isolated</button><button><svg><use href="#list"/></svg>Show All</button><button aria-label="Hide"><svg><use href="#list"/></svg></button><button aria-label="Up"><svg><use href="#l-up"/></svg></button><button aria-label="Down"><svg><use href="#l-dn"/></svg></button><button aria-label="Move"><svg><use href="#l-mv"/></svg></button><button aria-label="Expand all"><svg><use href="#l-exp"/></svg></button><button aria-label="Collapse all"><svg><use href="#l-col"/></svg></button></footer>
  </aside>
</main>

<section class="anim">
  <div class="transport">
    <div class="tcol"><button aria-label="First"><svg viewBox="0 0 10 10"><path d="M2 1v8M8 1 4 5l4 4z"/></svg></button><button aria-label="Rewind"><svg viewBox="0 0 10 10"><path d="M5 1 1 5l4 4zM9 1 5 5l4 4z"/></svg></button></div>
    <div class="tmid"><button class="play">Play</button><div><button aria-label="Slower"><svg viewBox="0 0 10 10"><path d="M7 2 4 5l3 3z"/></svg></button><button class="rate">1x</button><button aria-label="Faster"><svg viewBox="0 0 10 10"><path d="m4 2 3 3-3 3z"/></svg></button></div></div>
    <div class="tcol"><button aria-label="Last"><svg viewBox="0 0 10 10"><path d="M8 1v8M2 1l4 4-4 4z"/></svg></button><button aria-label="Forward"><svg viewBox="0 0 10 10"><path d="m1 1 4 4-4 4zM5 1l4 4-4 4z"/></svg></button></div>
  </div>
  <div class="animset">
    <div class="arow"><label for="an">Animation:</label><select id="an" disabled><option></option></select></div>
    <div class="arow"><button class="b te"><svg><use href="#track"/></svg>Track Editor</button><button class="b" disabled><svg><use href="#key"/></svg>Set Key</button><button class="b" disabled><svg><use href="#free"/></svg>Free mode</button></div>
  </div>
  <div class="timeline"><div class="ruler"><span class="zero">0</span><span>12</span><span>24</span><span>36</span><span>48</span><span>60</span><span>72</span><span>84</span><span>96</span><span>108</span><b>12</b></div><div class="trackbar"></div></div>
</section>
<footer class="status"><button class="b sl">Selected</button><button class="b gold">Auto</button><button class="b pv"><i></i>Pivot</button><button class="b clr" disabled aria-label="Clear"><svg viewBox="0 0 10 10"><path d="m1 1 8 8M9 1 1 9" stroke="#000" stroke-width="1.500"/></svg></button><output>Cursor: 3.76000, 0.69000, 0.00000</output></footer>
<script src="scene.js"></script>
</body>
</html>
```
FILE: styles.css
```css
* { box-sizing: border-box; }
body { margin: 0; min-height: 100vh; display: flex; flex-direction: column; overflow: hidden; background: linear-gradient(90deg, #36435c 0, #323e55 148px, #272727 148px); color: #dce3ee; font: 11px/16px "Noto Sans", sans-serif; }
button { font: inherit; color: inherit; background: none; border: 0; padding: 0; margin: 0; display: flex; align-items: center; justify-content: center; white-space: nowrap; }
h1, h2 { font: inherit; margin: 0; }
ul { list-style: none; margin: 0; padding: 0; }
svg { display: block; flex: none; }
.sprite { position: absolute; width: 0; height: 0; }
.tri { width: 0; height: 0; border: 3px solid transparent; border-top-color: #fff; border-bottom: 0; }
.tri.up { border: 5px solid transparent; border-bottom-color: #fff; border-top: 0; }
.tri.lft { border: 4px solid transparent; border-right: 4px solid #fff; border-left: 0; margin: 0 2px 0 12px; }
.i16 { width: 14px; height: 16px; }
.i32 { width: 32px; height: 32px; }

.titlebar { height: 23px; background: #fff; color: #000; display: flex; align-items: center; padding-left: 2px; gap: 6px; }
.win { margin-left: auto; display: flex; padding-right: 3px; }
.win button { width: 46px; height: 21px; }
.win svg { width: 10px; height: 10px; fill: none; stroke: #000; }

.toolbar { height: 29px; display: flex; background: linear-gradient(#4a6294 0, #3a4a6c 15px, #252525 16px, #252525); }
.band { display: flex; align-items: center; height: 28px; padding: 0 1px 2px 8px; border-right: 2px solid #1c2433; margin-right: 2px; background: linear-gradient(#3f4c68, #5a6478 12px, #55585f 14px, #3c3e44); box-shadow: inset 7px 0 6px -3px #26334c; }
.menu { gap: 16px; padding-left: 16px; width: 163px; color: #c9cfda; }
.pair { display: flex; margin-left: -6px; }
.tb { width: 23px; height: 22px; }
.tb svg, .lvl svg { width: 16px; height: 16px; }
.tb.on { width: 21px; margin-right: 2px; background: linear-gradient(#d8b868, #c08c28); border: 1px solid #181818; border-radius: 2px; }
.drop { width: 13px; height: 14px; border-left: 1px solid #222; }
.drop::after, .more::after { content: ""; border: 3px solid transparent; border-top-color: #fff; border-bottom: 0; }
.drop.dark::after { border-top-color: #000; }
.more { width: 9px; height: 18px; margin: 6px 0 0 3px; border: 1px solid #222c40; border-radius: 2px; align-items: flex-end; padding-bottom: 3px; background: linear-gradient(#4e5c78, #2a3040); }
.space { width: 200px; height: 21px; margin-right: 2px; border: 0; border-radius: 0; background: #e1e1e1; color: #000; font: inherit; padding: 0 2px; }
.axes { padding-left: 8px; }
.axes .more { margin-left: 0; }
.lvl { gap: 3px; padding: 0 6px 0 3px; color: #ccd3de; }

.work { flex: 1; display: grid; grid-template-columns: 46px 1fr 309px; min-height: 0; }
.rail { padding: 8px 6px 0 2px; display: flex; flex-direction: column; gap: 2px; border-top: 4px solid #232a38; }
.rail button { height: 21px; border: 1px solid #1a2231; background: linear-gradient(#4b5b7c, #39465f 50%, #2a3448); box-shadow: inset 0 1px #66779a; }
.rail .go { height: 17px; }
.rail svg { width: 30px; height: 20px; }
.center { display: flex; flex-direction: column; min-width: 0; }
.grip { width: 16px; flex: none; display: flex; flex-direction: column; align-items: center; gap: 4px; background: linear-gradient(90deg, #2a3140, #181b22); overflow: hidden; }
.sq { width: 15px; height: 15px; flex: none; border: 1px solid #000; border-radius: 2px; box-shadow: inset 0 0 0 1px #8394b4; background: linear-gradient(#4c6090, #1b2436); }
.sq svg { width: 9px; height: 9px; }
.vert { writing-mode: vertical-rl; font-size: 12px; line-height: 16px; white-space: nowrap; color: #eef2f8; }

.command { display: flex; height: 102px; padding-bottom: 4px; }
.ribbon { flex: 1; min-width: 0; }
.ribtop { display: flex; height: 20px; align-items: flex-end; background: #26262670; }
.mouse { align-self: flex-start; height: 16px; width: 91px; gap: 12px; border: 1px solid #6c7d9f; border-top: 0; background: linear-gradient(#3a4866, #4a5c84); padding: 0 3px 2px; }
.mouse.right { margin-left: auto; width: 78px; }
.tabs { display: flex; align-items: flex-end; margin-left: 16px; }
.tabs button, .ntabs button { height: 18px; padding: 0 11px 1px; border-top: 1px solid #77819a; border-right: 1px solid #3c4250; background: linear-gradient(#32394a, #22252c); }
.tabs .sel, .ntabs .sel { height: 20px; padding-bottom: 3px; background: linear-gradient(#465a86, #2f3c58); }
.tools { display: flex; gap: 4px; height: 72px; margin: 0 6px 0 4px; padding: 4px 4px 0 7px; border: 1px solid #464b56; border-left-color: #2c3240; }
.big { position: relative; width: 40px; height: 62px; padding: 6px 0 0; flex-direction: column; justify-content: space-between; border: 1px solid #4c576e; outline: 1px solid #14161c; background: linear-gradient(#343d52, #333b4c 48%, #1f232c 50%, #252a35); }
.big.wide { width: 62px; }
.cnr { position: absolute; width: 12px; height: 12px; right: 1px; top: 1px; }
.submesh { width: 416px; height: 62px; background: linear-gradient(#2b3140, #20242e); border: 1px solid #454f66; }
.submesh h2 { height: 15px; display: flex; align-items: center; justify-content: center; padding-left: 10px; padding-bottom: 1px; background: linear-gradient(#6a80b0, #44567e); position: relative; }
.submesh .tri { position: absolute; left: 4px; top: 5px; }
.subrow { display: flex; gap: 4px; padding: 3px 5px; }
.subrow button { position: relative; width: 40px; height: 40px; border: 1px solid #465168; outline: 1px solid #14161c; background: linear-gradient(#343d52, #1f232c 50%, #252a35); }

.views { flex: 1; min-height: 0; display: grid; gap: 7px 6px; grid-template-columns: 835fr 720fr; grid-template-rows: 303fr 374fr; padding-right: 3px; }
.view { display: flex; flex-direction: column; min-width: 0; min-height: 0; }
.view header { height: 21px; flex: none; display: flex; align-items: center; padding: 0 5px 0 2px; border-top: 1px solid #67799c; background: linear-gradient(#4c649a, #33425f 45%, #232730 60%, #20242b); color: #d6dde9; }
.vname { font-weight: 600; height: 18px; padding: 0 2px; border: 1px solid #8492ac; background: linear-gradient(#54688f, #232a38); }
.view nav { display: flex; align-items: center; gap: 11px; }
.tray { margin-left: auto; display: flex; align-items: center; gap: 4px; height: 16px; padding: 0 5px 0 7px; border: 1px solid #7788a6; background: linear-gradient(90deg, #66789c, #2c3a58 60%); }
.tray svg, .vbtns svg { width: 12px; height: 12px; }
.vbtns { display: flex; gap: 2px; margin: 0 6px; }
.vbtns button { height: 17px; justify-content: space-between; padding: 0 1px 0 3px; border: 1px solid #1a202c; border-top-color: #7f90b4; background: linear-gradient(#4a5c86, #2a3140 48%, #15181e); }
.vz { width: 54px; }
.vp { width: 40px; }
.vf { width: 36px; }
.max { width: 19px; height: 16px; border: 1px solid #6c7fa4; background: linear-gradient(#4d6494, #1c2230); }
.max::after { content: ""; width: 10px; height: 8px; border: 1px solid #fff; border-top-width: 2px; }
.canvas { position: relative; flex: 1; min-height: 0; background: #c9c9c9; overflow: hidden; }
.canvas::after { content: ""; position: absolute; inset: 0; box-shadow: inset 0 0 6px #0009; }
.scene { width: 100%; height: 100%; }
.minor { fill: url(#minor); }
.major { fill: url(#major); }
.scene .w, .van3d path { vector-effect: non-scaling-stroke; }
.gizmo { position: absolute; left: 4px; bottom: 0; width: 74px; height: 72px; font: 600 13px "Noto Sans", sans-serif; }
.gizmo.small { width: 46px; height: 36px; font-size: 10px; }

.messages { display: flex; height: 122px; margin-top: 7px; }
.messages .vert { font-size: 11px; }
.log { flex: 1; margin-left: 2px; background: linear-gradient(#cdcdcd, #989898); color: #333; }
.log li { height: 20px; display: flex; align-items: center; padding-left: 14px; gap: 4px; }
.log svg { width: 15px; height: 15px; }
.first { background: linear-gradient(#f2f0ec, #dddbd6); }
.log .gold, .tree .gold { background: linear-gradient(#e8ce78, #e6d59c 48%, #cfae48 52%, #c5a43c); border: 1px solid #66561c; border-top-color: #fff2c0; border-left: 0; color: #222; }

.browser { display: flex; flex-direction: column; padding: 0 2px 0 3px; background: #23262d; }
.browser header { height: 20px; display: flex; align-items: center; gap: 2px; padding: 0 2px 2px 2px; background: linear-gradient(#3c4860, #242830); }
.browser h2 { flex: 1; }
.ntabs { display: flex; align-items: flex-end; height: 20px; padding-left: 5px; background: linear-gradient(#4a6092, #2d3a56 60%, #23262d); }
.ntabs button { padding: 0 5px 1px; height: 18px; }
.panel { margin: 0 4px; padding: 5px 2px 0; height: 244px; border: 1px solid #454c5a; display: flex; flex-direction: column; gap: 2px; background: linear-gradient(90deg, #38445c 0, #313c52 84px, #272727 84px); }
.row { display: flex; gap: 3px; height: 19px; }
.b { height: 19px; min-width: 24px; border: 1px solid #05070a; border-radius: 2px; outline: 1px solid #78869e; outline-offset: -1px; background: linear-gradient(#5a74a8, #3a4a6c 45%, #1c2638 55%, #222e46); color: #f0f4fa; box-shadow: 0 0 0 1px #0c0f16; }
.b:disabled { color: #14171d; background: linear-gradient(#3f4c66a0, #2a3142a0 50%, #1f2430a0 52%, #262d3ca0); outline-color: #464f60; box-shadow: none; }
.b.gold { background: linear-gradient(#f0bc50, #c48820); color: #2c1e04; }
.col { width: 33px; }
.dust { width: 42px; }
.dirt { width: 34px; }
.scratch { width: 51px; }
.dmg { width: 69px; gap: 10px; }
.ns { width: 69px; }
.ds { width: 77px; }
.es { width: 60px; }
.ug { width: 59px; }
.og { width: 77px; }
.sep { height: 19px; display: flex; align-items: center; gap: 2px; color: #494e58; padding: 0 9px 0 3px; }
.sep::before, .sep::after { content: ""; flex: 1; height: 1px; background: linear-gradient(90deg, transparent, #5d6f92); }
.sep::after { background: linear-gradient(90deg, #5d6f92, transparent); }
.state { height: 19px; width: 284px; display: flex; border: 1px solid #2c1e04; background: linear-gradient(#8a6420, #a87c2a); }
.state button { width: 17px; background: linear-gradient(#e8ac30, #b88018); border-right: 1px solid #2c1e04; }
.state button svg { width: 14px; height: 14px; }
.state strong { flex: 1; text-align: center; color: #fff; }
.row.tall { height: 40px; }
.tall > .b { height: 40px; }
.conv { width: 159px; gap: 4px; }
.dis { width: 78px; gap: 2px; }
.stack { display: flex; flex-direction: column; gap: 2px; }
.stack .b { width: 33px; }
.hbar { height: 20px; margin: 3px 2px 0 1px; background: #f0f0f0; display: flex; align-items: center; justify-content: space-between; padding-right: 22px; }
.hbar span { flex: 1; margin: 0 20px 0 4px; height: 16px; background: #cdcdcd; }
.chev { width: 6px; height: 6px; border: solid #505050; border-width: 2px 2px 0 0; }
.chev.l { transform: rotate(-135deg); margin-left: 7px; }
.chev.r { transform: rotate(45deg); }
.chev.u { transform: rotate(-45deg); margin-top: 7px; }
.chev.d { transform: rotate(135deg); margin-bottom: 7px; }
.split { height: 8px; margin: 4px 0 2px; border: 2px solid #1a2232; border-top-color: #5b6e96; background: #3b4a6a; }
.treewrap { flex: 1; display: flex; min-height: 0; }
.tree { flex: 1; background: linear-gradient(#cdcdcd, #9a9a9a); color: #333; padding-right: 3px; position: relative; }
.tree::before { content: ""; position: absolute; inset: 0; background: linear-gradient(#8091b4, #8091b4) 19px 0 / 1px 570px no-repeat, linear-gradient(#8091b4, #8091b4) 32px 0 / 1px 550px no-repeat; }
.tree li { height: 20px; display: flex; align-items: center; justify-content: flex-start; position: relative; padding-left: 33px; }
.tree li::before { content: ""; width: 5px; height: 1px; background: #8091b4; }
.tree label { display: flex; align-items: center; gap: 3px; margin-left: 3px; }
.tree .root { padding-left: 19px; }
.tree .root::before { width: 7px; }
.tree .first { background: linear-gradient(#f2f0ec, #d8d6d0); }
.bold { font-weight: 700; color: #222; }
.tree .hover { background: #c8b878b0; border-bottom: 1px solid #a8945a; border-radius: 2px; }
.tree input { appearance: none; width: 11px; height: 11px; margin: 0; background: #eef0f6; border: 1px solid #dfe3ec; border-right-color: #888e9c; border-bottom-color: #888e9c; }
.tree input:checked::before { content: ""; display: block; width: 11px; height: 10px; margin: -1px 0 0 -1px; background: #2c58c8; clip-path: polygon(5% 30%, 25% 30%, 48% 62%, 82% 0, 100% 0, 55% 100%, 40% 100%); }
.plus { position: absolute; left: 28px; top: 6px; width: 9px; height: 9px; background: linear-gradient(#444, #444) 1px 3px / 5px 1px no-repeat, linear-gradient(#444, #444) 3px 1px / 1px 5px no-repeat, #f4f4f4; border: 1px solid #aaa; }
.vbar { width: 16px; background: #f0f0f0; display: flex; flex-direction: column; align-items: center; }
.vbar span { flex: 1; width: 14px; margin: 216px 0 10px; background: #cdcdcd; }
.browser footer { height: 27px; display: flex; align-items: center; gap: 8px; padding: 0 0 2px 12px; background: linear-gradient(#4a4c52, #2c2d30); }
.browser footer button { gap: 3px; }
.browser footer button:nth-child(-n+2) { margin-right: 2px; }
.browser footer svg { width: 15px; height: 15px; }

.anim { height: 52px; display: flex; border-top: 1px solid #4c5a74; background: #33373f; }
.transport { display: flex; margin: 1px 5px 2px 10px; background: #1a2231; gap: 1px; }
.transport button { background: linear-gradient(#50648f, #38476a 48%, #262e40 52%, #2f3a52); border: 1px solid #1c2536; border-top-color: #7183a8; color: #000; flex: 1; }
.transport svg { width: 9px; height: 9px; fill: #000; stroke: #000; }
.tcol { width: 16px; display: flex; flex-direction: column; }
.tmid { width: 73px; display: flex; flex-direction: column; font-weight: 700; }
.tmid div { display: flex; height: 17px; }
.tmid .rate { flex: 3; }
.animset { width: 260px; padding: 2px 6px 0 0; display: flex; flex-direction: column; gap: 3px; background: #46484d; }
.arow { display: flex; align-items: center; gap: 4px; padding-left: 2px; color: #b4b6ba; }
.arow label { padding-left: 9px; }
.arow select { flex: 1; height: 21px; border: 0; background: #cfcfcf; opacity: 1; color: #999; border-radius: 0; }
.arow .b { height: 24px; padding: 0 7px; gap: 7px; }
.arow svg { width: 14px; height: 14px; }
.arow .te { padding: 0 6px 0 4px; }
.timeline { flex: 1; margin-left: 2px; border-left: 6px solid #1a2130; padding: 3px 2px 0 0; background: #202124; min-width: 0; }
.ruler { height: 28px; margin-left: 2px; display: flex; padding-left: 8px; border-top: 2px solid #55585e; color: #777; background: #2f2f2f; line-height: 14px; }
.ruler span { flex: 1; border-left: 1px solid #8a8a8a; height: 12px; background: repeating-linear-gradient(90deg, #777 0 1px, transparent 1px calc(100% / 12)) 0 0 / 100% 5px no-repeat; padding-top: 11px; text-indent: -7px; }
.ruler .zero { text-indent: 1px; }
.ruler b { font-weight: 400; width: 4px; padding-top: 11px; border-left: 1px solid #8a8a8a; height: 12px; text-indent: -10px; }
.trackbar { height: 18px; background: linear-gradient(#4a4a4a, #3a3a3a); }
.status { height: 23px; display: flex; justify-content: flex-end; align-items: center; gap: 6px; padding-right: 30px; border-bottom: 2px solid #1c100a; background: #141414; }
.status .b { height: 16px; font-weight: 600; padding: 0 4px; min-width: 18px; }
.status .sl { width: 66px; }
.status .pv { width: 54px; gap: 7px; }
.pv i { width: 8px; height: 8px; border-radius: 50%; background: radial-gradient(#ff8070, #b01008); }
.status .b.gold { width: 33px; }
.status svg { width: 9px; height: 9px; }
.status output { color: #eef2f8; }
```
FILE: scene.js
```
// Wireframe meshes for the orthographic viewports.
const NS = 'http://www.w3.org/2000/svg';
let seed = 7;
function rnd() {
  seed = (seed * 1664525 + 1013904223) >>> 0;
  return seed / 4294967296;
}
function add(parent, d, stroke = '#000', width = 1, fill = 'none', opacity = 1) {
  const p = document.createElementNS(NS, 'path');
  p.setAttribute('d', d);
  p.setAttribute('class', 'w');
  p.setAttribute('stroke', stroke);
  p.setAttribute('stroke-width', width);
  p.setAttribute('fill', fill);
  p.setAttribute('opacity', opacity);
  parent.append(p);
}
// Triangulated patch between four corners, nx by ny cells.
function mesh(q, nx, ny, jit = 0) {
  const P = [];
  for (let j = 0; j <= ny; j++) {
    P.push([]);
    for (let i = 0; i <= nx; i++) {
      const u = i / nx, v = j / ny;
      const inner = i && j && i < nx && j < ny ? jit : 0;
      const at = k => (1 - v) * ((1 - u) * q[k] + u * q[2 + k]) + v * ((1 - u) * q[6 + k] + u * q[4 + k]);
      P[j].push((at(0) + (rnd() - .5) * inner).toFixed(1) + ' ' + (at(1) + (rnd() - .5) * inner).toFixed(1));
    }
  }
  let d = '';
  for (let j = 0; j <= ny; j++) for (let i = 0; i <= nx; i++) {
    if (i < nx) d += `M${P[j][i]}L${P[j][i + 1]}`;
    if (j < ny) d += `M${P[j][i]}L${P[j + 1][i]}`;
    if (i < nx && j < ny) d += rnd() < .5 ? `M${P[j][i]}L${P[j + 1][i + 1]}` : `M${P[j][i + 1]}L${P[j + 1][i]}`;
  }
  return d;
}
function specks(n, x0, y0, x1, y1, len) {
  let d = '';
  for (let k = 0; k < n; k++) d += `M${Math.round(x0 + rnd() * (x1 - x0))} ${Math.round(y0 + rnd() * (y1 - y0)) + .5}h${1 + Math.round(rnd() * len)}`;
  return d;
}

function endView(g, reds) {
  add(g, 'M-122 6h22v69h-22zM100 6h23v69h-23z', '#000', 1);
  add(g, mesh([-122, 6, -98, 6, -98, 75, -122, 75], 3, 15), '#000', 1, 'none', .7);
  add(g, mesh([99, 6, 123, 6, 123, 75, 99, 75], 3, 15), '#000', 1, 'none', .7);
  add(g, 'M-121 -45V6M121 -45V6M-88 -102V-60M-122 75H123', '#000', 1);
  add(g, 'M-73 -98C-40 -105 45 -105 75 -98L90 -60 98 -12 99 12V68L96 76V86H74V76L32 76V79H-33L-42 82H-80L-79 76-92 70-98 62-99 -15-91 -57ZM-62 -81-70 -48-34 -46-30 -50-26 -46 0 -46 32 -50 36 -47 73 -48 62 -82C40 -85-40 -85-62 -81Z', '#000', 1, '#000');
  add(g, mesh([-62, -81, 0, -84, 0, -46, -70, -48], 3, 3, 4) + mesh([0, -84, 62, -82, 73, -48, 0, -46], 3, 3, 4), '#000', 1, 'none', .75);
  add(g, 'M-66 -65H68M-64 -72H66M-68 -56H70', '#000', 1, 'none', .6);
  add(g, 'M-4 -84h9v38h-9z', '#000', 1, '#000', .85);
  add(g, mesh([-55, -64, -35, -64, -32, -46, -60, -46], 6, 5, 2) + mesh([38, -64, 60, -64, 64, -46, 36, -46], 6, 5, 2));
  for (const x of [-118, 99]) {
    add(g, `M${x + 4} -61h11l4 4v17l-4 4h-11l-4 -4v-17z`, '#000', 2);
    add(g, mesh([x + 2, -59, x + 17, -59, x + 17, -38, x + 2, -38], 2, 3, 3), '#000', 1, 'none', .8);
  }
  add(g, 'M-101 -42l12 -4v9h-12zM89 -46l13 4v5h-10z', '#000', 1, '#000');
  add(g, 'M74 84h23v14l-2 3H76l-2-3z', '#000', 2);
  add(g, mesh([75, 84, 96, 84, 96, 101, 75, 101], 3, 3, 2));
  add(g, specks(90, -90, -42, 88, 60, 2), '#c9c9c9', 1, 'none', .45);
  add(g, specks(90, -60, -44, 60, -10, 2), '#c9c9c9', 1, 'none', .5);
  for (const x of [-62, -22, 14, 46]) add(g, specks(28, x, 44, x + 18, 54, 3), '#d0c8c8', 1, 'none', .6);
  add(g, specks(30, -32, -92, 32, -86, 3), '#c9c9c9', 1, 'none', .7);
  let r = '', v = '';
  for (let k = 0; k < reds; k++) r += `M${Math.round(-72 + rnd() * 150)} ${Math.round(-65 + rnd() * 130) + .5}h${10 + Math.round(rnd() * 16)}`;
  for (let k = 0; k < 20; k++) v += `M${Math.round(-86 + rnd() * 176) + .5} ${Math.round(-55 + rnd() * 80)}v${10 + Math.round(rnd() * 22)}`;
  add(g, r, '#a01010', 1, 'none', .55);
  add(g, 'M95 -29.500h33M103 -17.500h26M100 -61h20M95 45h20M98 61h20M10 51h22', '#e03030', 1, 'none', .8);
  add(g, v, '#0c6a14', 1, 'none', .6);
  add(g, 'M.5 -128V46M-86 -91v30M86 -91v30', '#0c9a1c', 1, 'none', .85);
  add(g, 'M98 -19h4v4h-4zM84 58h3v3h-3zM-80 77h3v3h-3z', '#2233cc', 1);
  add(g, 'M-9 -9 10 10M10 -9-9 10', '#88306c', 1);
  add(g, 'M-5 -5H6V6H-5Z', 'none', 1, '#7d3466');
}
endView(document.getElementById('front'), 26);
endView(document.getElementById('back'), 50);

const L = document.getElementById('left');
// Body shell
add(L, 'M215 500C215 465 240 442 270 428L390 385 525 220Q545 200 600 196L720 188H1320L1415 198Q1440 205 1450 270L1476 400 1484 520 1480 640 1500 645 1498 680H1440L1150 708 500 705V695', '#000', 2);
add(L, mesh([540, 212, 715, 190, 715, 218, 560, 245], 12, 3, 4) + mesh([715, 188, 1430, 198, 1420, 234, 715, 220], 34, 3, 5));
add(L, 'M560 226Q600 208 710 206H1100L1420 208', '#000', 4);
add(L, 'M560 245C535 270 520 300 490 345', '#000', 5);
add(L, mesh([525, 222, 560, 240, 490, 350, 400, 385], 5, 14, 6));
add(L, 'M1418 200Q1440 205 1452 270L1478 400 1484 520 1478 650H1458L1462 480 1450 330 1430 230Z', '#000', 1, '#000');
// Hood and engine bay
add(L, mesh([218, 490, 400, 380, 490, 378, 300, 460], 18, 7, 8));
add(L, 'M222 470C235 445 270 425 390 388L500 375', '#000', 4);
add(L, mesh([220, 460, 292, 440, 298, 595, 222, 600], 12, 14, 6) + mesh([225, 470, 290, 470, 296, 590, 225, 590], 10, 12, 6));
add(L, mesh([215, 600, 310, 600, 320, 692, 215, 692], 6, 6, 6) + mesh([190, 605, 220, 605, 220, 700, 195, 700], 5, 10, 4));
add(L, mesh([300, 430, 480, 420, 480, 500, 300, 540], 5, 3, 18), '#000', 1, 'none', .7);
// Cabin
add(L, mesh([485, 320, 525, 300, 545, 480, 480, 480], 10, 16, 8) + mesh([485, 400, 555, 400, 570, 620, 480, 600], 10, 16, 12));
add(L, mesh([565, 410, 680, 410, 680, 480, 565, 480], 8, 5, 12) + mesh([570, 540, 680, 500, 690, 630, 560, 625], 11, 9, 12));
add(L, mesh([430, 480, 560, 490, 570, 620, 480, 620], 8, 7, 12), '#000', 1, 'none', .8);
add(L, mesh([548, 245, 680, 235, 680, 400, 490, 400], 2, 3, 20), '#000', 1, 'none', .65);
add(L, mesh([678, 235, 713, 235, 713, 690, 685, 675], 5, 26, 8));
add(L, 'M684 235V670M710 225V700', '#000', 3);
add(L, 'M500 340V480M520 400V480M557 490V690M570 440V540', '#000', 3, 'none', .9);
// Cargo side: glass, belt, lower panels
add(L, mesh([735, 235, 880, 235, 880, 400, 735, 400], 2, 3, 10) + mesh([895, 235, 1010, 235, 1010, 400, 895, 400], 2, 3, 10) + mesh([1045, 235, 1240, 235, 1240, 400, 1045, 400], 2, 3, 10) + mesh([1258, 235, 1400, 235, 1415, 400, 1258, 400], 2, 3, 10), '#000', 1, 'none', .65);
for (const x of [730, 815, 870, 890, 925, 950, 1010, 1030, 1040, 1070, 1115, 1130, 1240, 1255, 1315]) add(L, `M${x} 195V${x > 1140 ? 680 : 700}M${x + 6} 200V${x > 1140 ? 560 : 690}`, '#000', 1, 'none', .8);
add(L, 'M880 230V480M1020 200V520M1248 200V400', '#000', 3);
add(L, 'M480 402H1440M1020 408H1460', '#000', 2);
add(L, mesh([480, 398, 1445, 398, 1445, 410, 480, 410], 40, 1));
add(L, mesh([300, 505, 500, 488, 500, 520, 330, 520], 10, 2, 5) + mesh([500, 490, 1465, 492, 1465, 522, 500, 520], 40, 3, 5));
add(L, 'M500 492H1460M713 520H1440', '#000', 2);
add(L, mesh([715, 410, 1020, 410, 1020, 490, 715, 490], 8, 2, 16) + mesh([1040, 410, 1455, 410, 1460, 492, 1040, 492], 6, 2, 16) + mesh([715, 522, 1150, 522, 1150, 690, 715, 690], 9, 4, 14) + mesh([1330, 522, 1450, 522, 1450, 690, 1340, 690], 3, 4, 14), '#000', 1, 'none', .7);
let fan = '';
for (let k = 0; k < 48; k++) {
  const x = 720 + Math.round(rnd() * 560);
  fan += `M${x} ${[235, 400, 522][k % 3]}L${x + Math.round(rnd() * 300 - 130)} ${[400, 490, 690][k % 3]}`;
}
add(L, fan, '#000', 1, 'none', .55);
add(L, 'M848 418h24v66h-24zM854 418v66M860 418v66M866 418v66', '#000', 1);
add(L, mesh([712, 670, 1020, 672, 1020, 702, 712, 702], 40, 4, 3) + mesh([510, 685, 1150, 690, 1150, 708, 510, 704], 40, 2, 3));
add(L, 'M712 684H1020', '#000', 5);
// Arches and wheel
add(L, 'M310 640C320 490 480 490 512 690M325 645C335 505 465 505 498 690M1142 690C1150 480 1335 480 1345 690M1155 690C1165 500 1322 500 1332 690', '#000', 1);
add(L, 'M318 642C328 498 472 498 505 690M1148 690C1158 490 1328 490 1338 690', '#000', 2, 'none', .6);
add(L, mesh([1235, 530, 1252, 530, 1252, 690, 1235, 690], 2, 10, 3) + mesh([392, 535, 412, 535, 412, 600, 392, 600], 2, 6, 3));
let spokes = '';
for (let k = 0; k < 36; k++) {
  const a = k * Math.PI / 18, b = a + .12;
  spokes += `M${402 + 40 * Math.cos(a)} ${697 + 56 * Math.sin(a)}L${402 + 74 * Math.cos(b)} ${697 + 104 * Math.sin(b)}`;
}
add(L, spokes, '#000', 1, 'none', .85);
add(L, 'M327 697a75 105 0 1 0 150 0a75 105 0 1 0-150 0', '#000', 2);
add(L, 'M364 697a38 54 0 1 0 76 0a38 54 0 1 0-76 0', '#000', 4);
add(L, 'M380 697a22 34 0 1 0 44 0a22 34 0 1 0-44 0', '#000', 2, '#000');
add(L, 'M368 670 436 725M368 725 436 670M402 640V755', '#000', 3);
add(L, 'M934 590a18 32 0 1 0 36 0a18 32 0 1 0-36 0', '#000', 1);
// Plow
add(L, 'M38 522Q60 510 80 530 125 590 118 650 110 690 88 715L65 727Q95 690 98 640 90 550 45 525', '#000', 1);
add(L, mesh([50, 520, 75, 520, 105, 560, 90, 560], 5, 4, 4) + mesh([95, 560, 115, 560, 120, 660, 98, 660], 3, 10, 3) + mesh([98, 660, 118, 660, 90, 720, 70, 725], 3, 6, 3) + mesh([115, 660, 190, 662, 195, 696, 118, 696], 6, 2, 2));
add(L, 'M38 365 50 515M40 520V560M143 500 195 612M142 500 200 485M203 480V705', '#000', 2);
add(L, 'M142 500V600M120 575 148 655M150 505 192 610', '#000', 4);
add(L, 'M376 192V385', '#000', 1);
// Tail, exhaust and hitch
add(L, 'M1440 630H1494V682H1440ZM1330 692 1382 742', '#000', 4);
add(L, mesh([1440, 630, 1494, 630, 1494, 682, 1440, 682], 6, 4, 2) + mesh([1150, 705, 1320, 690, 1330, 730, 1225, 735], 4, 2, 6));
add(L, 'M1370 725l24 4v18h-20z', '#000', 2, '#000');
add(L, 'M1440 708H1515V686M1532 655V680', '#000', 2);
add(L, 'M1526 666a6 9 0 1 0 12 0a6 9 0 1 0-12 0', '#000', 1, '#000');
// Normals and pivots
add(L, 'M634 150V200M1423 118V195M382 318V380M474 215V330M310 370V420M263 430V470M222 490V560M478 320V400M590 230V310M690 360V400M1443 250V330M1517 595V650M1532 570V640M402 580V650M1382 650V700M1483 410V480', '#0c7a14', 1, 'none', .8);
add(L, 'M1440 208H1487M1465 334H1505M1465 364H1510M1465 391H1512M1484 482H1540M1484 500H1548M1480 566H1518M1480 656H1560M1530 682H1560M1395 736H1446M590 316H655M640 236H700M480 411H540M800 500H858M690 447H750M520 376H575M256 652H310', '#3038c0', 1, 'none', .8);
add(L, 'M1175 494H1195M1290 494H1305', '#c02020', 1);
add(L, 'M778 486H798V517H778Z', 'none', 1, '#a03080');
```
